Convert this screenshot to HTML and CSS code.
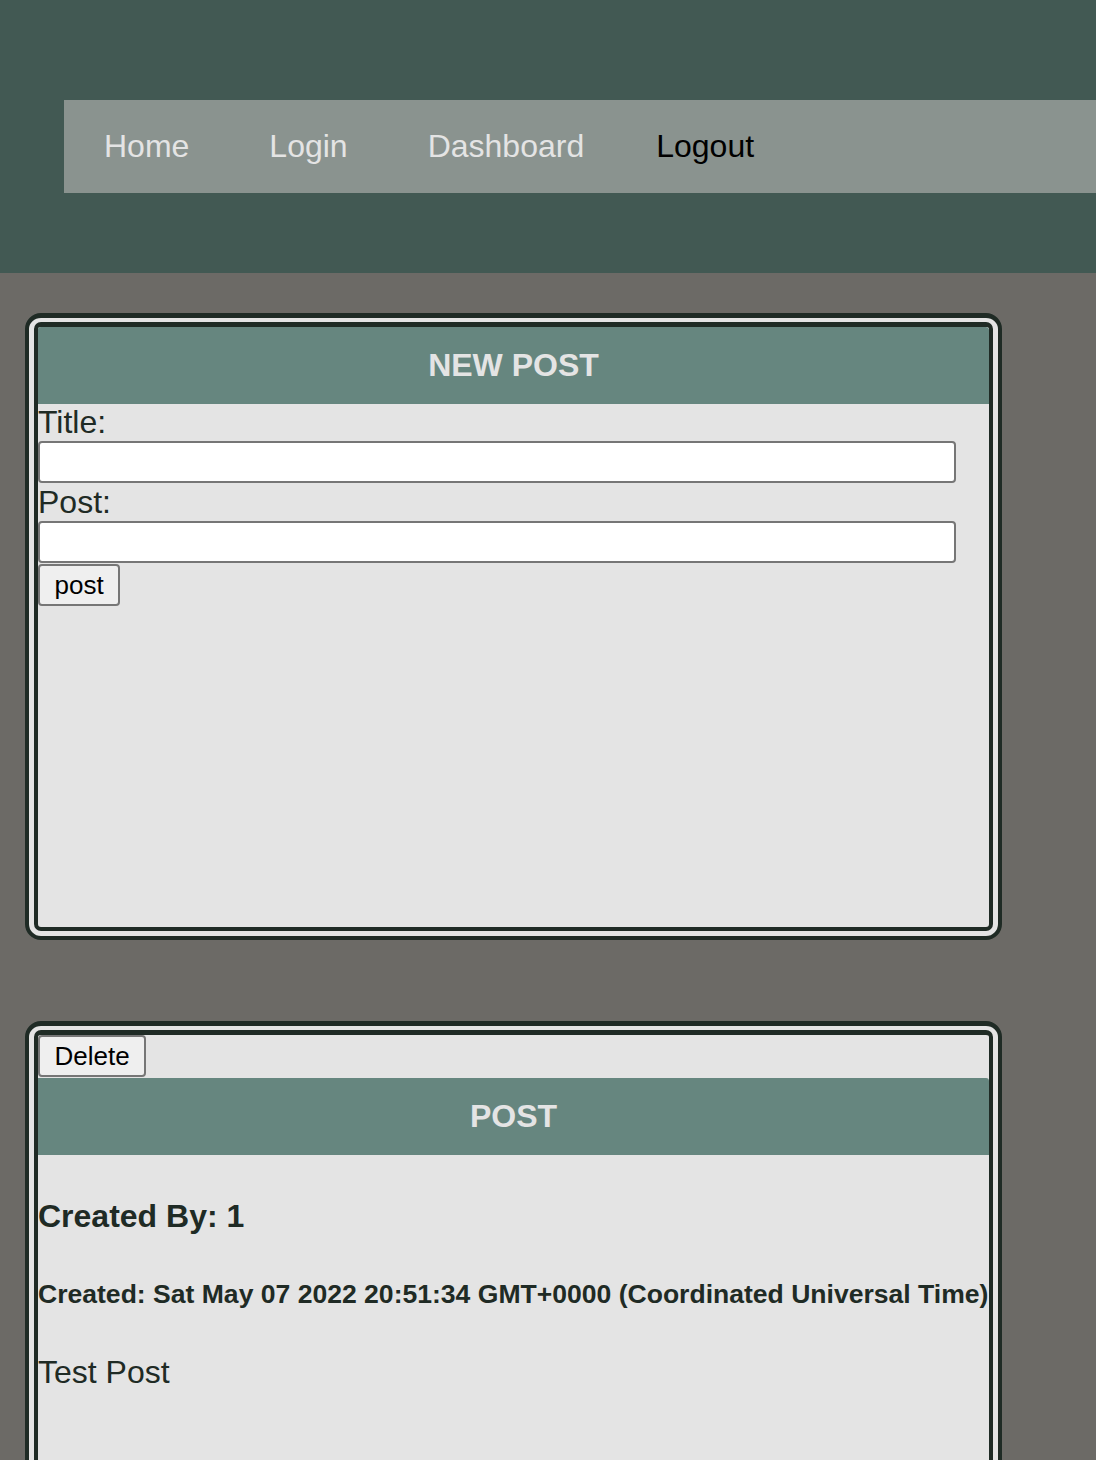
FILE: index.html
```html
<html>
    <head>
        <link rel="stylesheet" href="styles.css">
        <title>Dashboard</title>
    </head>
    <body>
        <header class="site-header">
            <nav class="nav">
                <a class="nav-link" href="#">Home</a>
                <a class="nav-link" href="#">Login</a>
                <a class="nav-link" href="#">Dashboard</a>
                <span class="nav-link nav-logout">Logout</span>
            </nav>
        </header>

        <main class="content">
            <section class="card">
                <div class="card-title">NEW POST</div>
                <form class="post-form">
                    <label class="field-label" for="field-title">Title:</label>
                    <input class="field-input" type="text" id="field-title">
                    <label class="field-label" for="field-post">Post:</label>
                    <input class="field-input" type="text" id="field-post">
                    <button class="btn btn-submit" type="button">post</button>
                </form>
            </section>

            <section class="card">
                <div class="card-actions">
                    <button class="btn" type="button">Delete</button>
                </div>
                <div class="card-title">POST</div>
                <h4 class="post-author">Created By: 1</h4>
                <h5 class="post-date">Created: Sat May 07 2022 20:51:34 GMT+0000 (Coordinated Universal Time)</h5>
                <p class="post-body">Test Post</p>
            </section>
        </main>
    </body>
</html>
```

FILE: styles.css
```css
body {
    margin: 0;
    background-color: #6c6a66;
    font-family: "Liberation Sans", Arial, sans-serif;
    font-size: 32px;
    color: #1f2b25;
}

.site-header {
    background-color: #425953;
    padding: 100px 0 80px 64px;
}

.nav {
    display: flex;
    background-color: #8a938f;
}

.nav-link {
    padding: 28px 40px;
    line-height: 37px;
    color: #e4e4e4;
    text-decoration: none;
}

.nav-logout {
    color: #000000;
    padding-left: 32px;
}

.content {
    display: flex;
    flex-direction: column;
    gap: 81px;
    padding: 40px 0 40px 25px;
}

.card {
    width: 951px;
    min-height: 600px;
    border: 13px double #1f2b25;
    border-top-width: 14px;
    border-radius: 16px;
    background-color: #e4e4e4;
    overflow: hidden;
}

.card-title {
    background-color: #66867f;
    color: #e4e4e4;
    font-weight: bold;
    text-align: center;
    padding: 20px;
    line-height: 37px;
    border-top-right-radius: 3px;
}

.post-form {
    display: flex;
    flex-direction: column;
    align-items: flex-start;
}

.field-label {
    line-height: 37px;
}

.field-input {
    box-sizing: border-box;
    width: 918px;
    height: 42px;
    border: 2px solid #767676;
    border-radius: 4px;
    background-color: #ffffff;
    font-family: inherit;
    font-size: 26px;
}

.field-input + .field-label {
    line-height: 38px;
}

.btn {
    box-sizing: border-box;
    height: 42px;
    padding: 0 14.5px;
    border: 2px solid #767676;
    border-radius: 4px;
    background-color: #efefef;
    font-family: inherit;
    font-size: 26px;
    color: #000000;
}

.btn-submit {
    margin-top: 1px;
}

.card-actions {
    height: 43px;
}

.post-author {
    margin: 1.33em 0;
    line-height: 37px;
}

.post-date {
    font-size: 0.83em;
    margin: 1.67em 0;
    white-space: nowrap;
}

.post-body {
    margin: 1em 0;
}
```
